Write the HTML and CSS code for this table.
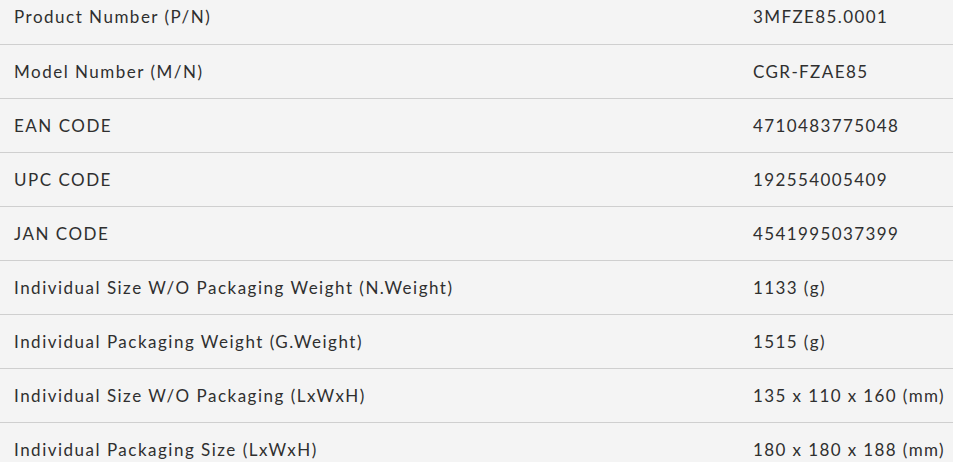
FILE: index.html
```html
<!DOCTYPE html>
<html>
<head>
<meta charset="utf-8">
<link rel="stylesheet" href="styles.css">
</head>
<body>
<table class="spec">
<tbody>
<tr><td class="k">Product Number (P/N)</td><td class="v">3MFZE85.0001</td></tr>
<tr><td class="k">Model Number (M/N)</td><td class="v">CGR-FZAE85</td></tr>
<tr><td class="k">EAN CODE</td><td class="v">4710483775048</td></tr>
<tr><td class="k">UPC CODE</td><td class="v">192554005409</td></tr>
<tr><td class="k">JAN CODE</td><td class="v">4541995037399</td></tr>
<tr><td class="k">Individual Size W/O Packaging Weight (N.Weight)</td><td class="v">1133 (g)</td></tr>
<tr><td class="k">Individual Packaging Weight (G.Weight)</td><td class="v">1515 (g)</td></tr>
<tr><td class="k">Individual Size W/O Packaging (LxWxH)</td><td class="v">135 x 110 x 160 (mm)</td></tr>
<tr><td class="k">Individual Packaging Size (LxWxH)</td><td class="v">180 x 180 x 188 (mm)</td></tr>
</tbody>
</table>
</body>
</html>
```
FILE: styles.css
```css
html, body {
  margin: 0;
  padding: 0;
  background: #f4f4f4;
  overflow: hidden;
}
.spec {
  width: 100%;
  border-collapse: collapse;
  margin-top: -10px;
  font-family: "Lato", "Open Sans", sans-serif;
  font-size: 17px;
  color: #2f2f2f;
  letter-spacing: 1.5px;
}
.spec td {
  height: 54px;
  padding: 0 0 0 14px;
  border-bottom: 1px solid #cfcfcf;
  vertical-align: middle;
  box-sizing: border-box;
  white-space: nowrap;
}
.spec .k {
  width: 753px;
}
.spec .v {
  padding-left: 0;
  letter-spacing: 1.4px;
}
```
